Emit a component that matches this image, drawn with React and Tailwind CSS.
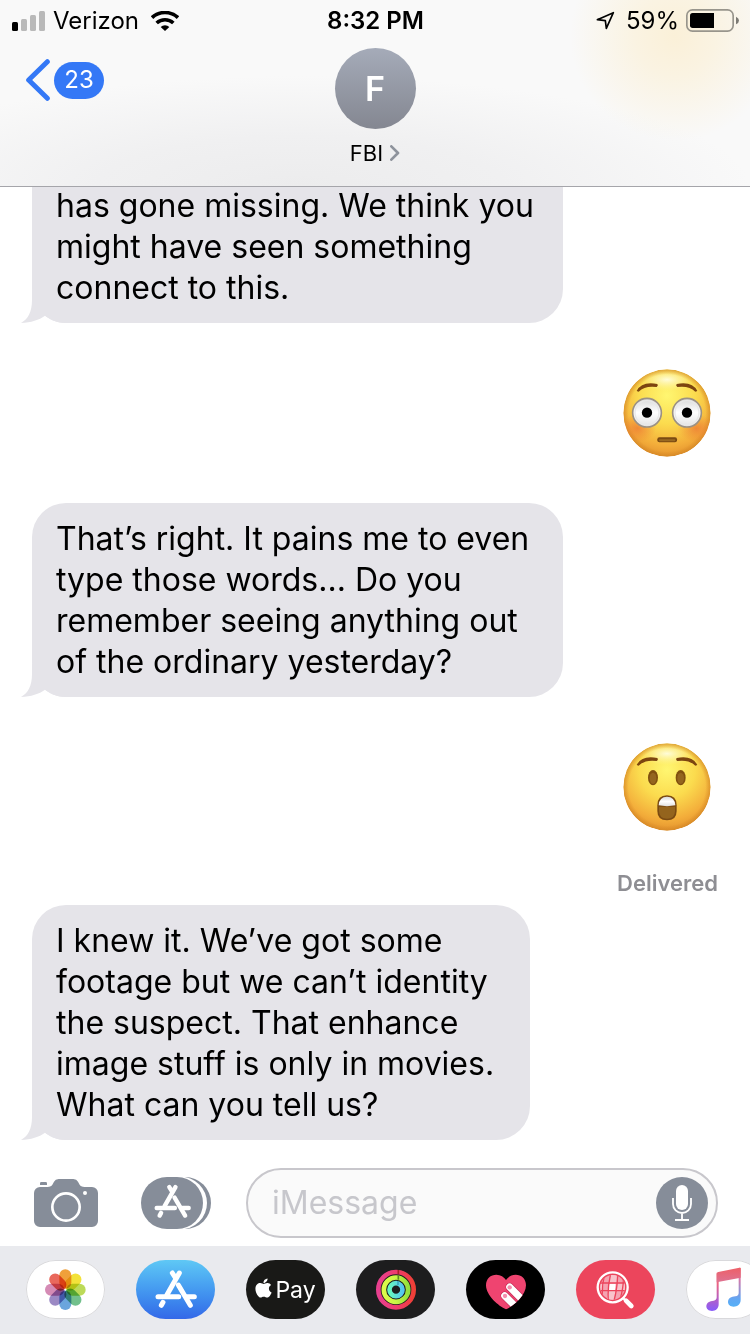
import React from "react";
import { FaApple } from "react-icons/fa";

function SignalBars() {
  return (
    <svg viewBox="0 0 33 20" className="h-5 w-[33px]" aria-hidden="true">
      <rect x="0" y="11" width="6" height="9" rx="1.5" fill="#000" />
      <rect x="9" y="8" width="6" height="12" rx="1.5" fill="#b9b9b9" />
      <rect x="18" y="4" width="6" height="16" rx="1.5" fill="#b9b9b9" />
      <rect x="27" y="0" width="6" height="20" rx="1.5" fill="#b9b9b9" />
    </svg>
  );
}

function Wifi() {
  return (
    <svg viewBox="0 0 84 60" className="h-5 w-7" aria-hidden="true">
      <path d="M3 20 A57 57 0 0 1 81 20" fill="none" stroke="#000" strokeWidth="11" />
      <path d="M17 36 A37 37 0 0 1 67 36" fill="none" stroke="#000" strokeWidth="11" />
      <path d="M42 60 L29 48 A18.500 18.500 0 0 1 55 48 Z" fill="#000" />
    </svg>
  );
}

function LocationArrow() {
  return (
    <svg viewBox="0 0 57 57" className="h-[19px] w-[19px]" aria-hidden="true">
      <path d="M4 26 L52 5 L31 52 L28 29 Z" fill="none" stroke="#000" strokeWidth="5" strokeLinejoin="round" />
    </svg>
  );
}

function Battery() {
  return (
    <svg viewBox="0 0 159 69" className="h-[23px] w-[53px]" aria-hidden="true">
      <rect x="2.500" y="2.500" width="139" height="64" rx="17" fill="none" stroke="#98958c" strokeWidth="5" />
      <path d="M20 12 H84 V57 H20 Q12 57 12 49 V20 Q12 12 20 12 Z" fill="#000" />
      <path d="M150 23 Q159 27 159 34.500 Q159 42 150 46 Z" fill="#7c7a74" />
    </svg>
  );
}

function EmojiBase({ id, label, children }) {
  return (
    <svg viewBox="0 0 264 264" className="h-22 w-22" role="img" aria-label={label}>
      <defs>
        <radialGradient id={id + "f"} cx="0.5" cy="0.3" r="0.72">
          <stop offset="0" stopColor="#fff671" />
          <stop offset="0.45" stopColor="#fbdb4e" />
          <stop offset="0.8" stopColor="#f3ad3a" />
          <stop offset="1" stopColor="#e18f2c" />
        </radialGradient>
        <radialGradient id={id + "h"} cx="0.5" cy="0.5" r="0.5">
          <stop offset="0" stopColor="#fffde0" stopOpacity="0.95" />
          <stop offset="1" stopColor="#fff6a0" stopOpacity="0" />
        </radialGradient>
        <radialGradient id={id + "e"} cx="0.5" cy="0.5" r="0.5">
          <stop offset="0.88" stopColor="#d58520" stopOpacity="0" />
          <stop offset="1" stopColor="#cf8424" stopOpacity="0.65" />
        </radialGradient>
        <radialGradient id={id + "b"}>
          <stop offset="0" stopColor="#ec7434" stopOpacity="0.7" />
          <stop offset="1" stopColor="#ee7e33" stopOpacity="0" />
        </radialGradient>
        <linearGradient id={id + "w"} x1="0" y1="0" x2="0" y2="1">
          <stop offset="0" stopColor="#d8d8d8" />
          <stop offset="0.5" stopColor="#ffffff" />
          <stop offset="1" stopColor="#e2e2e2" />
        </linearGradient>
        <clipPath id={id + "c"}>
          <circle cx="132" cy="132" r="131" />
        </clipPath>
      </defs>
      <g clipPath={"url(#" + id + "c)"}>
        <circle cx="132" cy="132" r="131" fill={"url(#" + id + "f)"} />
        <ellipse cx="132" cy="32" rx="85" ry="34" fill={"url(#" + id + "h)"} />
        <circle cx="132" cy="132" r="131" fill={"url(#" + id + "e)"} />
        <path d="M41 66 Q56 36 103 45 Q107 50 101 54 Q66 49 47 68 Z" fill="#7c4510" />
        <path d="M223 66 Q208 36 161 45 Q157 50 163 54 Q198 49 217 68 Z" fill="#7c4510" />
        {children}
      </g>
    </svg>
  );
}

function FlushedFace() {
  return (
    <EmojiBase id="flushed" label="Flushed face">
      <ellipse cx="44" cy="178" rx="56" ry="42" fill="url(#flushedb)" />
      <ellipse cx="220" cy="178" rx="56" ry="42" fill="url(#flushedb)" />
      <circle cx="72" cy="131" r="43" fill="url(#flushedw)" stroke="#9b9184" strokeWidth="5" />
      <circle cx="192" cy="131" r="43" fill="url(#flushedw)" stroke="#9b9184" strokeWidth="5" />
      <circle cx="72" cy="131" r="36" fill="none" stroke="#e8e8e8" strokeWidth="4" />
      <circle cx="192" cy="131" r="36" fill="none" stroke="#e8e8e8" strokeWidth="4" />
      <circle cx="72" cy="131" r="15.500" fill="#000" />
      <circle cx="192" cy="131" r="15.500" fill="#000" />
      <rect x="103" y="205" width="59" height="15" rx="6" fill="#7a4a12" />
      <rect x="108" y="211" width="49" height="6" rx="3" fill="#9a6a22" />
    </EmojiBase>
  );
}

function AstonishedFace() {
  return (
    <EmojiBase id="astonished" label="Astonished face">
      <ellipse cx="90" cy="104" rx="15" ry="23" fill="#80500f" />
      <ellipse cx="90" cy="106" rx="10" ry="17" fill="#94651f" />
      <ellipse cx="173" cy="104" rx="15" ry="23" fill="#80500f" />
      <ellipse cx="173" cy="106" rx="10" ry="17" fill="#94651f" />
      <path d="M103 187 Q103 157 132 157 Q161 157 161 187 V204 Q161 232 132 232 Q103 232 103 204 Z" fill="#7a4a12" />
      <path d="M108 191 H156 V204 Q156 227 132 227 Q108 227 108 204 Z" fill="#94641d" />
      <path d="M107 187 Q109 161 132 161 Q155 161 157 187 Q132 192 107 187 Z" fill="url(#astonishedw)" />
    </EmojiBase>
  );
}

function Bubble({ text, className }) {
  return (
    <div className={"relative ml-8 shrink-0 whitespace-pre-line bg-[#e5e4e9] px-6 text-[32px] leading-[41px] text-black " + className}>
      <svg viewBox="0 0 49 33" className="absolute bottom-0 -left-[11px] h-[33px] w-[49px]" aria-hidden="true">
        <path d="M11 0 V10 C11 22 7 29 0 33 C10 32.500 18 30 24 25.700 C31 31 38 33 49 33 V0 Z" fill="#e5e4e9" />
      </svg>
      <p className="relative">{text}</p>
    </div>
  );
}

function StoreGlyph() {
  return (
    <g stroke="#fff" strokeWidth="15" strokeLinecap="round" fill="none">
      <path d="M130 39 L93 104" />
      <path d="M109 39 L118 53" />
      <path d="M66 110 H128" />
      <path d="M127 75 L163 136" />
      <path d="M154 110 H175" />
      <path d="M81 127 L76 136" />
    </g>
  );
}

function CameraIcon() {
  return (
    <svg viewBox="0 0 192 144" className="h-12 w-16" aria-hidden="true">
      <path
        d="M18 24 H40 Q52 24 56 16 L60 8 Q64 0 74 0 H118 Q128 0 132 8 L136 16 Q140 24 152 24 H174 A18 18 0 0 1 192 42 V126 A18 18 0 0 1 174 144 H18 A18 18 0 0 1 0 126 V42 A18 18 0 0 1 18 24 Z"
        fill="#868d99"
      />
      <path d="M18 18 V13 Q18 9 22 9 H35 Q39 9 39 13 V18 Z" fill="#868d99" />
      <circle cx="96" cy="84" r="41" fill="none" stroke="#fff" strokeWidth="8" />
      <circle cx="153" cy="42" r="6" fill="#fff" />
    </svg>
  );
}

function AppsIcon() {
  return (
    <svg viewBox="0 0 210 156" className="h-[52px] w-[70px]" aria-hidden="true">
      <rect x="24" y="0" width="186" height="156" rx="78" fill="#868d99" />
      <rect x="12" y="-1" width="186" height="158" rx="79" fill="#fff" />
      <rect x="0" y="0" width="186" height="156" rx="78" fill="#868d99" />
      <g transform="translate(-11 -4) scale(0.88)">
        <StoreGlyph />
      </g>
    </svg>
  );
}

function MicIcon() {
  return (
    <svg viewBox="0 0 156 156" className="h-[52px] w-[52px]" aria-hidden="true">
      <circle cx="78" cy="78" r="78" fill="#868d99" />
      <rect x="60" y="24" width="36" height="75" rx="18" fill="#fff" />
      <path d="M51 63 V81 A27 27 0 0 0 105 81 V63 M78 108 V129 M57 129 H99" fill="none" stroke="#fff" strokeWidth="5.500" />
    </svg>
  );
}

const petals = ["#f0a03a", "#f3e23a", "#bcda58", "#72c08c", "#6ba5dd", "#9b89c4", "#d58bb5", "#e9685c"];

function PhotosArt() {
  return (
    <svg viewBox="0 0 237 177" className="h-full w-full" aria-hidden="true">
      <g transform="translate(118 89)">
        {petals.map((c, i) => (
          <rect key={c} x="-18" y="-61" width="36" height="58" rx="18" fill={c} transform={"rotate(" + i * 45 + ")"} className="mix-blend-multiply" />
        ))}
      </g>
    </svg>
  );
}

function StoreArt() {
  return (
    <svg viewBox="0 0 237 177" className="h-full w-full" aria-hidden="true">
      <StoreGlyph />
    </svg>
  );
}

function RingsArt() {
  return (
    <svg viewBox="0 0 237 177" className="h-full w-full" aria-hidden="true">
      <defs>
        <linearGradient id="ringOuter">
          <stop offset="0" stopColor="#e8408f" />
          <stop offset="0.55" stopColor="#ee3b6b" />
          <stop offset="1" stopColor="#ef4036" />
        </linearGradient>
        <linearGradient id="ringMid">
          <stop offset="0" stopColor="#dcfb4a" />
          <stop offset="0.5" stopColor="#c8f545" />
          <stop offset="1" stopColor="#93e03c" />
        </linearGradient>
        <linearGradient id="ringInner">
          <stop offset="0" stopColor="#66f7bd" />
          <stop offset="1" stopColor="#55c6ef" />
        </linearGradient>
      </defs>
      <g fill="none" strokeWidth="14">
        <circle cx="120" cy="89" r="53" stroke="url(#ringOuter)" />
        <circle cx="120" cy="89" r="36.500" stroke="url(#ringMid)" />
        <circle cx="120" cy="89" r="19.500" stroke="url(#ringInner)" />
        <path d="M127 30 V42" stroke="#a82226" strokeWidth="5" />
        <path d="M127 46 V59" stroke="#5b8a22" strokeWidth="5" />
        <path d="M126 63 V75" stroke="#2f9db4" strokeWidth="4" />
      </g>
    </svg>
  );
}

function HeartArt() {
  const heart = "M120 148 C98 139 60 106 60 76 C60 56 74 44 91 44 C104 44 114 51 120 60 C126 51 136 44 149 44 C166 44 180 56 180 76 C180 106 142 139 120 148 Z";
  return (
    <svg viewBox="0 0 237 177" className="h-full w-full" aria-hidden="true">
      <defs>
        <clipPath id="heartClip">
          <path d={heart} />
        </clipPath>
      </defs>
      <path d={heart} fill="#ef4470" />
      <g clipPath="url(#heartClip)">
        <path d="M131 81 L175 125 M116 107 L156 147" stroke="#c22a54" strokeWidth="25" strokeLinecap="round" />
        <path d="M131 81 L175 125 M116 107 L156 147" stroke="#fff" strokeWidth="21" strokeLinecap="round" />
        <circle cx="131" cy="82" r="6.500" fill="#f48fae" />
        <circle cx="117" cy="108" r="6.500" fill="#f48fae" />
      </g>
    </svg>
  );
}

function SearchArt() {
  return (
    <svg viewBox="0 0 237 177" className="h-full w-full" aria-hidden="true">
      <defs>
        <clipPath id="globeClip">
          <circle cx="110" cy="82" r="37" />
        </clipPath>
      </defs>
      <g clipPath="url(#globeClip)">
        <rect x="70" y="42" width="80" height="80" fill="#f5a3b1" />
        <path d="M70 70 H85 L80 92 H70 Z M103 42 H125 L121 68 H101 Z M98 92 H118 L114 122 H92 Z M125 70 H150 V90 H122 Z" fill="#f8c4cc" />
        <path d="M100 71 H119 L117 91 H98 Z" fill="#fff" />
        <path d="M70 69 H150 M70 92 H150" stroke="#ec455c" strokeWidth="4" />
        <path d="M104 42 Q94 82 97 122 M125 42 Q124 86 114 122 M86 42 Q76 82 80 122 M143 42 Q143 86 131 122" stroke="#ec455c" strokeWidth="4" fill="none" />
      </g>
      <circle cx="110" cy="82" r="45" fill="none" stroke="#fff" strokeWidth="7" />
      <path d="M141 114 L150 123" stroke="#fff" strokeWidth="7" />
      <path d="M150 122 L166 138" stroke="#fff" strokeWidth="14" strokeLinecap="round" />
    </svg>
  );
}

function MusicArt() {
  return (
    <svg viewBox="0 0 237 177" className="h-full w-full" aria-hidden="true">
      <defs>
        <linearGradient id="noteLeft" gradientUnits="userSpaceOnUse" x1="0" y1="35" x2="0" y2="150">
          <stop offset="0" stopColor="#f2606a" />
          <stop offset="0.3" stopColor="#ee6480" />
          <stop offset="1" stopColor="#8a5cf7" />
        </linearGradient>
        <linearGradient id="noteRight" gradientUnits="userSpaceOnUse" x1="0" y1="22" x2="0" y2="140">
          <stop offset="0" stopColor="#ee5f66" />
          <stop offset="0.3" stopColor="#d878a8" />
          <stop offset="0.8" stopColor="#62a6f3" />
          <stop offset="1" stopColor="#55b0f7" />
        </linearGradient>
        <linearGradient id="noteBeam" gradientUnits="userSpaceOnUse" x1="0" y1="22" x2="0" y2="70">
          <stop offset="0" stopColor="#ee5f66" />
          <stop offset="1" stopColor="#dc7496" />
        </linearGradient>
      </defs>
      <path d="M92 38 H98 V133 C98 146 89 153 78 153 C68 153 61 147 61 139 C61 128 71 123 83 122 Q92 121 92 112 Z" fill="url(#noteLeft)" />
      <path d="M158 24 H164 V120 C164 133 154 140 143 140 C133 140 126 134 126 126 C126 115 136 110 148 109 Q158 108 158 99 Z" fill="url(#noteRight)" />
      <path d="M92 42 Q92 37 97 36 L160 23 Q164 22 164 27 V53 L92 67 Z" fill="url(#noteBeam)" />
    </svg>
  );
}

function PayArt() {
  return (
    <span className="flex h-full items-center justify-center text-[23px] leading-7 text-white">
      <FaApple className="mr-[3px] mb-1 h-[22px] w-[17px]" aria-hidden="true" />
      <span>Pay</span>
    </span>
  );
}

const apps = [
  { name: "Photos", look: "bg-white inset-ring-1 inset-ring-[#d9d9dc]", art: <PhotosArt /> },
  { name: "App Store", look: "bg-linear-to-b from-[#5fc8f5] to-[#3468e8]", art: <StoreArt /> },
  { name: "Apple Pay", look: "bg-[#191917]", art: <PayArt /> },
  { name: "Activity", look: "bg-[#1d1d1e]", art: <RingsArt /> },
  { name: "Digital Touch", look: "bg-black", art: <HeartArt /> },
  { name: "Images", look: "bg-[#ec455c]", art: <SearchArt /> },
  { name: "Music", look: "bg-white inset-ring-1 inset-ring-[#d9d9dc]", art: <MusicArt /> },
];

export default function App() {
  return (
    <div className="flex h-screen flex-col overflow-hidden bg-white font-['Inter','Liberation_Sans',sans-serif] text-black">
      <header className="shrink-0 border-b border-[#a5a5aa] bg-[#f9f9f9] bg-[radial-gradient(circle_at_90%_36px,#faf0d8_0px,#faf3e2_40px,#f9f9f900_105px),radial-gradient(ellipse_60%_110px_at_40%_100%,#ececed_0%,#f0f0f1_45%,#f9f9f900_100%)]">
        <div className="grid h-10 grid-cols-[1fr_auto_1fr] items-center pt-px pr-[11px] pl-3 text-2xl leading-7">
          <div className="flex items-center gap-2">
            <SignalBars />
            <span>Verizon</span>
            <span className="ml-1">
              <Wifi />
            </span>
          </div>
          <time className="font-semibold">8:32 PM</time>
          <div className="flex items-center justify-end gap-[7px]">
            <span className="mr-1">
              <LocationArrow />
            </span>
            <span>59%</span>
            <Battery />
          </div>
        </div>
        <nav className="grid grid-cols-[1fr_auto_1fr] items-start px-6 pt-2 pb-4">
          <button type="button" aria-label="Back, 23 unread" className="mt-[11px] flex items-center gap-1 justify-self-start">
            <svg viewBox="0 0 78 126" className="h-[42px] w-[26px]" aria-hidden="true">
              <path d="M70 8 L14 63 L70 118" fill="none" stroke="#3478f6" strokeWidth="15" strokeLinecap="round" strokeLinejoin="round" />
            </svg>
            <span className="flex h-[37px] w-[50px] items-center justify-center rounded-full bg-[#3478f6] text-2xl text-white">23</span>
          </button>
          <button type="button" className="flex flex-col items-center gap-2">
            <span className="flex size-[81px] items-center justify-center rounded-full bg-linear-to-b from-[#a5abb9] to-[#848791] text-white">
              <span className="text-[34px] leading-10 font-semibold">F</span>
            </span>
            <span className="mb-px flex items-center gap-[7px] text-[22px] leading-8">
              FBI
              <svg viewBox="0 0 30 48" className="h-4 w-[10px]" aria-hidden="true">
                <path d="M4 4 L24 24 L4 44" fill="none" stroke="#8e939c" strokeWidth="8" strokeLinecap="round" strokeLinejoin="round" />
              </svg>
            </span>
          </button>
        </nav>
      </header>

      <main className="flex min-h-0 flex-1 flex-col justify-end overflow-hidden pb-7">
        <Bubble className="w-[531px] rounded-b-[34px] pb-[15px]" text={"has gone missing. We think you\nmight have seen something\nconnect to this."} />
        <div className="mt-[46px] mr-[39px] shrink-0 self-end">
          <FlushedFace />
        </div>
        <Bubble className="mt-[46px] w-[531px] rounded-[34px] py-[15px]" text={"That’s right. It pains me to even\ntype those words... Do you\nremember seeing anything out\nof the ordinary yesterday?"} />
        <div className="mt-[46px] mr-[39px] shrink-0 self-end">
          <AstonishedFace />
        </div>
        <p className="mt-[38px] mr-8 shrink-0 self-end text-[22px] leading-7 font-semibold text-[#8e8e93]">Delivered</p>
        <Bubble className="mt-2 w-[498px] rounded-[34px] py-[15px]" text={"I knew it. We’ve got some\nfootage but we can’t identity\nthe suspect. That enhance\nimage stuff is only in movies.\nWhat can you tell us?"} />
      </main>

      <footer className="shrink-0">
        <form className="flex items-center pr-8 pb-2 pl-[34px]" onSubmit={(e) => e.preventDefault()}>
          <button type="button" aria-label="Camera" className="shrink-0">
            <CameraIcon />
          </button>
          <button type="button" aria-label="Apps" className="ml-[43px] shrink-0">
            <AppsIcon />
          </button>
          <div className="ml-[35px] flex h-[70px] min-w-0 flex-1 items-center rounded-full border-2 border-[#c8c7cc] bg-[#fafafa] pr-2 pl-6">
            <input type="text" aria-label="Message" placeholder="iMessage" className="min-w-0 flex-1 bg-transparent text-[32px] leading-10 outline-none placeholder:text-[#c7c7cc]" />
            <button type="button" aria-label="Record audio" className="shrink-0">
              <MicIcon />
            </button>
          </div>
        </form>
        <div className="flex h-22 gap-[31px] overflow-hidden bg-[#e9eaee] pt-[14px] pl-[26px]">
          {apps.map((app) => (
            <button key={app.name} type="button" aria-label={app.name} className={"h-[59px] w-[79px] shrink-0 overflow-hidden rounded-full " + app.look}>
              {app.art}
            </button>
          ))}
        </div>
      </footer>
    </div>
  );
}
